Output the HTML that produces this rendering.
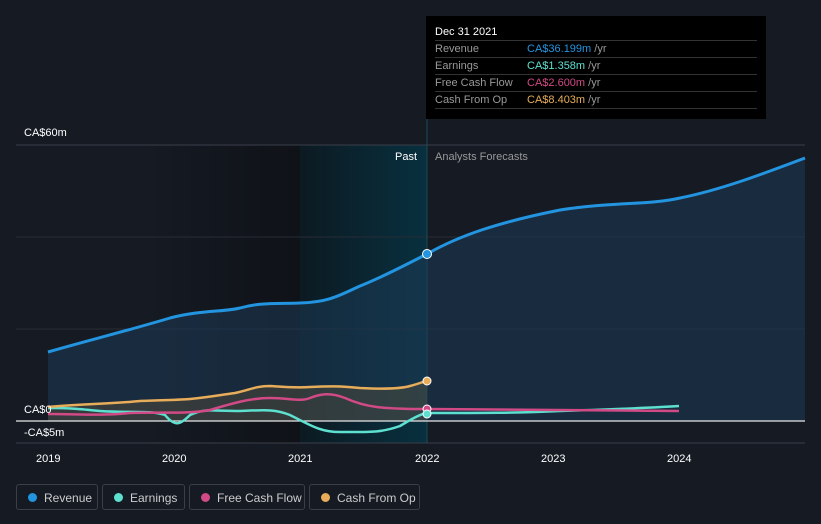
<!DOCTYPE html>
<html><head><meta charset="utf-8"><style>
body{margin:0;width:821px;height:524px;background:#151a23;font-family:"Liberation Sans",sans-serif;overflow:hidden;position:relative}
.tt{position:absolute;left:426px;top:16px;width:340px;height:103px;background:#000;color:#fff;font-size:11px}
.tt .h{position:absolute;left:9px;top:10px;font-size:11px}
.row{position:absolute;left:9px;width:322px;border-top:1px solid #333;height:17px;line-height:17px;color:#999}
.row span{position:absolute;left:92px}
.lg{position:absolute;top:484px;height:26px;border:1px solid #3a3f4a;border-radius:3px;color:#ccc;font-size:12px;line-height:26px;box-sizing:border-box}
.lg i{position:absolute;left:11px;top:8px;width:9px;height:9px;border-radius:50%}
.lg b{font-weight:normal;position:absolute;left:27px}
</style></head><body>
<svg width="821" height="524" style="position:absolute;left:0;top:0">
<defs>
<linearGradient id="pd" x1="0" x2="1"><stop offset="0" stop-color="#151a23"/><stop offset="1" stop-color="#0f1217"/></linearGradient>
<linearGradient id="hl" x1="0" x2="1"><stop offset="0" stop-color="#0c1a22"/><stop offset="1" stop-color="#08303f"/></linearGradient>
</defs>
<rect x="150" y="145" width="150" height="298" fill="url(#pd)"/>
<rect x="300" y="145" width="127" height="298" fill="url(#hl)"/>
<line x1="16" y1="145" x2="805" y2="145" stroke="#3a3f48"/>
<line x1="16" y1="237" x2="805" y2="237" stroke="#262c36"/>
<line x1="16" y1="329" x2="805" y2="329" stroke="#262c36"/>
<line x1="16" y1="443" x2="805" y2="443" stroke="#3a3f48"/>
<line x1="427" y1="118" x2="427" y2="443" stroke="#1f4a5a"/>
<path d="M48 352 C90 340 130 330 170 318 C200 310 225 312 240 308 C260 302 280 304 300 303 C330 302 340 295 360 286 C385 276 405 265 427 254 C460 235 500 222 560 210 C610 202 650 205 680 198 C720 190 760 175 805 158 L805 421 L48 421Z" fill="#1e3a55" fill-opacity="0.55"/>
<path d="M48 406 C100 402 150 400 180 400 C210 398 230 395 265 386 C300 386 330 385 360 388 C390 390 410 388 427 381 L427 421 L48 421Z" fill="#6a5a3a" fill-opacity="0.35"/>
<line x1="16" y1="421" x2="805" y2="421" stroke="#e6e6e6" stroke-width="1.2"/>
<path d="M48 408 C70 408 80 409 100 411 C130 413 150 410 165 415 C175 427 180 425 190 415 C205 408 210 411 240 411 C265 410 275 409 290 415 C310 425 320 432 340 432 C370 432 380 433 400 426 C410 420 420 414 427 413 C480 413 520 413 560 411 C620 409 650 408 679 406" fill="none" stroke="#5ee0d0" stroke-width="2.5"/>
<path d="M48 414 C80 414 100 416 130 413 C160 412 190 414 210 410 C230 404 250 398 270 398 C290 398 300 402 310 398 C320 394 330 392 345 398 C365 407 380 409 427 409 L679 411" fill="none" stroke="#d14a86" stroke-width="2.5"/>
<path d="M48 407 C80 404 110 404 140 401 C160 400 180 400 190 399 C210 397 220 395 235 393 C250 390 255 386 270 386 C285 387 295 388 310 387 C330 386 340 386 360 388 C380 389 400 389 410 386 C418 384 422 382 427 381" fill="none" stroke="#e8ad5a" stroke-width="2.5"/>
<path d="M48 352 C90 340 130 330 170 318 C200 310 225 312 240 308 C260 302 280 304 300 303 C330 302 340 295 360 286 C385 276 405 265 427 254 C460 235 500 222 560 210 C610 202 650 205 680 198 C720 190 760 175 805 158" fill="none" stroke="#2394df" stroke-width="3"/>
<circle cx="427" cy="254" r="4.5" fill="#2394df" stroke="#fff" stroke-width="1"/>
<circle cx="427" cy="381" r="4" fill="#e8ad5a" stroke="#fff" stroke-width="1"/>
<circle cx="427" cy="409" r="4" fill="#d14a86" stroke="#fff" stroke-width="1"/>
<circle cx="427" cy="414" r="4" fill="#5ee0d0" stroke="#fff" stroke-width="1"/>
<g font-size="11" fill="#fff">
<text x="24" y="136">CA$60m</text>
<text x="24" y="413">CA$0</text>
<text x="24" y="436">-CA$5m</text>
<text x="395" y="160">Past</text>
<text x="435" y="160" fill="#999">Analysts Forecasts</text>
<text x="36" y="462">2019</text><text x="162" y="462">2020</text><text x="288" y="462">2021</text>
<text x="415" y="462">2022</text><text x="541" y="462">2023</text><text x="667" y="462">2024</text>
</g>
</svg>
<div class="tt"><div class="h">Dec 31 2021</div>
<div class="row" style="top:24px">Revenue<span><em style="font-style:normal;color:#2394df">CA$36.199m</em> /yr</span></div>
<div class="row" style="top:41px">Earnings<span><em style="font-style:normal;color:#5ee0d0">CA$1.358m</em> /yr</span></div>
<div class="row" style="top:58px">Free Cash Flow<span><em style="font-style:normal;color:#d14a86">CA$2.600m</em> /yr</span></div>
<div class="row" style="top:75px">Cash From Op<span><em style="font-style:normal;color:#e8ad5a">CA$8.403m</em> /yr</span></div>
<div class="row" style="top:92px;height:0"></div>
</div>
<div class="lg" style="left:16px;width:82px"><i style="background:#2394df"></i><b>Revenue</b></div>
<div class="lg" style="left:102px;width:83px"><i style="background:#5ee0d0"></i><b>Earnings</b></div>
<div class="lg" style="left:189px;width:116px"><i style="background:#d14a86"></i><b>Free Cash Flow</b></div>
<div class="lg" style="left:309px;width:111px"><i style="background:#e8ad5a"></i><b>Cash From Op</b></div>
</body></html>
